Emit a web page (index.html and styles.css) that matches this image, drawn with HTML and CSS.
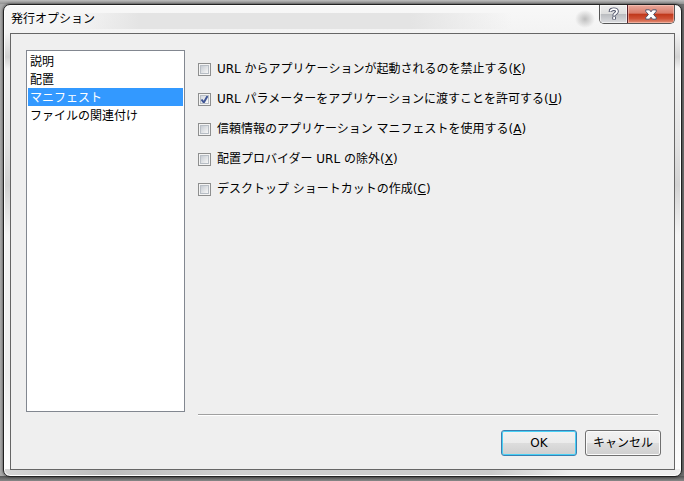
FILE: index.html
```html
<!DOCTYPE html>
<html lang="ja">
<head>
    <meta charset="UTF-8">
    <meta name="viewport" content="width=device-width, initial-scale=1.0">
    <title>発行オプション</title>
    <link rel="stylesheet" href="styles.css">
</head>
<body>
    <div class="window" role="dialog" aria-labelledby="window-title">
        <header class="titlebar">
            <h1 class="title" id="window-title">発行オプション</h1>
            <div class="caption-buttons">
                <button type="button" class="caption-button help" aria-label="ヘルプ">
                    <svg width="12" height="14" viewBox="0 0 12 14" fill="none">
                        <path d="M2.500 5V4.200C2.500 1.500 9 1.500 9 4.400c0 2-2.900 2-2.900 4.400M6.100 9.500v3" stroke="#50546a" stroke-width="3.600"/>
                        <path d="M2.500 4.500V4.200C2.500 1.500 9 1.500 9 4.400c0 2-2.900 2-2.900 4M6.100 10v2" stroke="#fff" stroke-width="1.800"/>
                    </svg>
                </button>
                <button type="button" class="caption-button close" aria-label="閉じる">
                    <svg width="12" height="11" viewBox="0 0 12 11">
                        <path d="M.8.8h3.700L6 2.800 7.500.8h3.700v1.700L8.600 5.500l2.600 3v1.700H7.500L6 8.200l-1.500 2H.8V8.500l2.600-3-2.600-3z" fill="#fff" stroke="#50546a"/>
                    </svg>
                </button>
            </div>
        </header>

        <form class="client">
            <select class="pages" size="4" aria-label="ページ">
                <option>説明</option>
                <option>配置</option>
                <option selected>マニフェスト</option>
                <option>ファイルの関連付け</option>
            </select>

            <div class="options">
                <label class="option"><input type="checkbox"><span>URL からアプリケーションが起動されるのを禁止する(<u>K</u>)</span></label>
                <label class="option"><input type="checkbox" checked><span>URL パラメーターをアプリケーションに渡すことを許可する(<u>U</u>)</span></label>
                <label class="option"><input type="checkbox"><span>信頼情報のアプリケーション マニフェストを使用する(<u>A</u>)</span></label>
                <label class="option"><input type="checkbox"><span>配置プロバイダー URL の除外(<u>X</u>)</span></label>
                <label class="option"><input type="checkbox"><span>デスクトップ ショートカットの作成(<u>C</u>)</span></label>
            </div>

            <div class="actions">
                <button type="submit" class="button default">OK</button>
                <button type="button" class="button">キャンセル</button>
            </div>
        </form>
    </div>
</body>
</html>
```

FILE: styles.css
```css
* {
    box-sizing: border-box;
}
body {
    margin: 0;
    padding: 4px 2px;
    height: 100vh;
    display: flex;
    background:
        linear-gradient(to bottom, #bcbcbc, #929292) top / 100% 4px no-repeat,
        linear-gradient(to bottom, #555, #888) bottom / 100% 5px no-repeat,
        linear-gradient(to right, #aaa, #707070);
    font-family: "DejaVu Sans", "Noto Sans CJK JP", sans-serif;
    font-size: 12px;
    line-height: 18px;
    color: #000;
}
button, select {
    font: inherit;
    color: inherit;
}

/* window frame */
.window {
    flex: 1;
    display: flex;
    flex-direction: column;
    margin-left: 1px;
    padding: 0 6px 6px;
    border: 1px solid #222;
    border-radius: 7px;
    box-shadow: inset 0 0 0 1px #fff, 0 0 3px #333;
    background:
        radial-gradient(ellipse 10px 9px at 581px 14px, #bdbdbd, transparent) no-repeat,
        linear-gradient(to right, transparent 10%, #e4e4e4 20% 60%, transparent 75%) 0 8px / 100% 16px no-repeat,
        linear-gradient(to right, #d6d6d6, #bdbdbd 15%, #d0d0d0 35%, #cacaca 72%, #eee 84%) bottom / 100% 7px no-repeat,
        linear-gradient(to bottom, #f8f8f8 0, #f3f3f3 28px, #d2d2d2 52px, #f2f2f2 64px, #e2e2e2 140px, #d2d2d2 180px, #f4f4f4 230px, #eee 370px, #fff 100%);
}
.titlebar {
    display: flex;
    justify-content: space-between;
    align-items: flex-start;
    height: 28px;
}
.title {
    margin: 0;
    padding-top: 4px;
    padding-left: 1px;
    font-size: 12px;
    font-weight: normal;
    line-height: 20px;
}
.caption-buttons {
    display: flex;
    border: 1px solid #555;
    border-top: 0;
    border-radius: 0 0 5px 5px;
    overflow: hidden;
}
.caption-button {
    display: flex;
    justify-content: center;
    align-items: center;
    width: 27px;
    height: 18px;
    padding: 0;
    border: 0;
    box-shadow: inset 0 0 0 1px rgba(255, 255, 255, 0.6);
    background: linear-gradient(#ececec, #dedede 48%, #b9bbbf 50%, #dcdde0);
}
.caption-button.close {
    width: 47px;
    border-left: 1px solid #58202a;
    box-shadow: inset 0 0 0 1px rgba(255, 210, 200, 0.5);
    background: linear-gradient(#e8a99c, #d97b69 46%, #bf3719 50%, #cf5034 75%, #e29178);
}

/* dialog contents */
.client {
    flex: 1;
    display: grid;
    grid-template-columns: 159px 1fr;
    grid-template-rows: 1fr auto;
    column-gap: 13px;
    padding: 16px 13px 13px 15px;
    border: 1px solid #666;
    background: #efefef;
}
.pages {
    display: block;
    width: 100%;
    height: 100%;
    padding: 1px;
    border: 1px solid #828790;
    border-radius: 0;
    outline: 0;
    background: #fff;
    overflow: hidden;
    scrollbar-width: none;
}
.pages option {
    height: 18px;
    min-height: 18px;
    padding: 0 2px;
    line-height: 16px;
    color: #000;
}
.pages option:checked {
    background: linear-gradient(#3399ff, #3399ff);
    color: #fff;
}
.options {
    display: flex;
    flex-direction: column;
    gap: 12px;
    padding-top: 10px;
}
.option {
    display: flex;
    align-items: center;
    gap: 6px;
    height: 18px;
    white-space: nowrap;
}
.option input {
    appearance: none;
    flex: none;
    width: 13px;
    height: 13px;
    margin: 0;
    border: 1px solid #8e8f8f;
    box-shadow: inset 0 0 0 1px #f4f4f4, inset 0 0 0 2px #b8bec5;
    background: linear-gradient(135deg, #c8cdd4 20%, #f6f6f6 80%);
}
.option input:checked {
    background:
        url("data:image/svg+xml,%3Csvg xmlns='http://www.w3.org/2000/svg' viewBox='0 0 11 11'%3E%3Cpath d='M2.500 5.500L4.800 8.500 8.500 2' fill='none' stroke='%233f5595' stroke-width='2'/%3E%3C/svg%3E"),
        linear-gradient(135deg, #d5d9df 20%, #fafafa 80%);
}

/* bottom row */
.actions {
    grid-column: 2;
    display: flex;
    justify-content: flex-end;
    gap: 8px;
    margin-top: 2px;
    padding-top: 16px;
    background:
        linear-gradient(#a0a0a0, #a0a0a0) 0 0 / calc(100% - 3px) 1px no-repeat,
        linear-gradient(#fff, #fff) 0 1px / calc(100% - 3px) 1px no-repeat;
}
.button {
    width: 76px;
    height: 26px;
    padding: 0;
    border: 1px solid #707070;
    border-radius: 3px;
    box-shadow: inset 0 0 0 1px #fbfbfb;
    background: linear-gradient(#f2f2f2, #ebebeb 49%, #dddddd 50%, #cfcfcf);
}
.button.default {
    border-color: #3c7fb1;
    box-shadow: inset 0 0 0 1px #48d0f5;
}
```
